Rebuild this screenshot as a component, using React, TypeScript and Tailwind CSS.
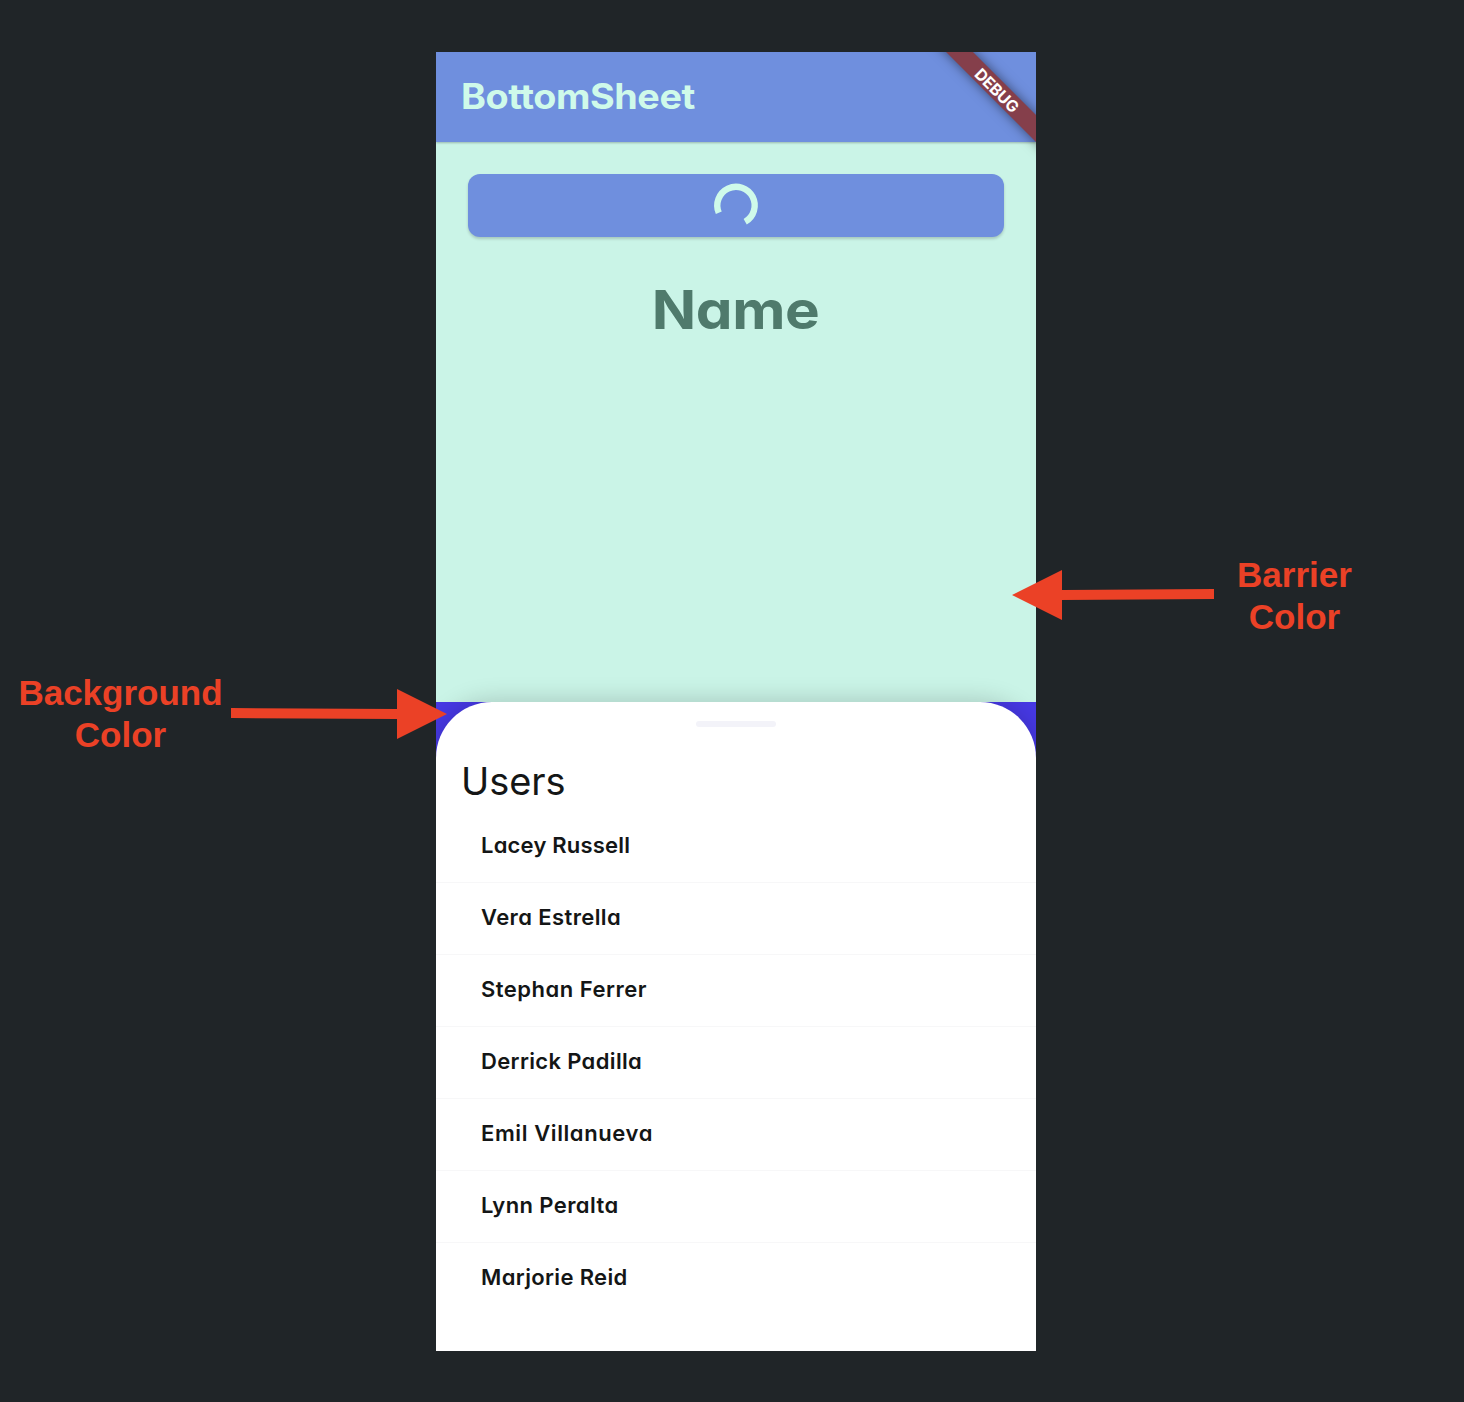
const users = [
  { name: 'Lacey Russell', tracking: 'tracking-[0.2px]' },
  { name: 'Vera Estrella', tracking: 'tracking-[0.4px]' },
  { name: 'Stephan Ferrer', tracking: 'tracking-[0.5px]' },
  { name: 'Derrick Padilla', tracking: 'tracking-[0.35px]' },
  { name: 'Emil Villanueva', tracking: 'tracking-[0.6px]' },
  { name: 'Lynn Peralta', tracking: 'tracking-[0.4px]' },
  { name: 'Marjorie Reid', tracking: 'tracking-[0.35px]' },
];

function AppBar() {
  return (
    <header className="relative z-10 flex h-[89.5px] shrink-0 items-center bg-[#6f8fde] pl-[25px] shadow-[0_1px_2px_rgba(0,0,0,0.25)]">
      <h1 className="origin-left scale-x-[1.078] text-[35px] leading-none font-bold tracking-[-0.4px] text-[#cffaea]">
        BottomSheet
      </h1>
    </header>
  );
}

function DebugBanner() {
  return (
    <div className="absolute top-0 right-0 z-20 size-[120px] overflow-hidden">
      <div className="absolute top-[27px] left-[-10px] flex h-[19px] w-[180px] rotate-45 items-center justify-center bg-[#853f4b] pl-[4px] font-['Inter',sans-serif] text-[16px] leading-none font-bold tracking-[-0.2px] text-white shadow-[0_0_12px_rgba(0,0,0,0.5)]">
        DEBUG
      </div>
    </div>
  );
}

function LoadingButton() {
  return (
    <button className="flex h-[63.5px] w-full items-center justify-center rounded-[12px] bg-[#6f8fde] shadow-[0_2px_3px_rgba(0,0,0,0.18)]">
      <svg className="overflow-visible" width="44" height="44" viewBox="0 0 44 44" fill="none">
        <path d="M4.8 29.8A18.7 18.7 0 1 1 31.2 38.7" stroke="#cffaea" strokeWidth="6.4" />
      </svg>
    </button>
  );
}

function BottomSheet() {
  return (
    <div className="h-[649.5px] shrink-0 bg-[#4739e5]">
      <section className="flex h-full flex-col rounded-t-[56px] bg-white pt-[19px] text-[#141616] shadow-[0_0_26px_rgba(0,0,0,0.2)]">
        <div className="h-[6px] w-[80px] shrink-0 self-center rounded-full bg-[#f3f3f9]" />
        <h2 className="mt-[29px] pl-[25px] text-[38px] leading-[50px] font-normal tracking-[-0.1px]">Users</h2>
        <ul className="mt-[5px]">
          {users.map((user) => (
            <li
              key={user.name}
              className={`flex h-[72px] items-center border-b border-[#f7f7f8] pb-[2px] pl-[45px] text-[22px] leading-none font-semibold last:border-transparent ${user.tracking}`}
            >
              {user.name}
            </li>
          ))}
        </ul>
      </section>
    </div>
  );
}

function Phone() {
  return (
    <main className="relative mt-[52px] flex h-[1299px] flex-col overflow-hidden bg-[#caf4e7] font-['Inter',sans-serif] font-normal [font-feature-settings:'cv11']">
      <AppBar />
      <DebugBanner />
      <div className="flex h-[560px] shrink-0 flex-col items-center px-[32px] pt-[32px]">
        <LoadingButton />
        <p className="mt-[41px] scale-x-[1.08] text-[54px] leading-[64px] font-bold tracking-[-0.4px] text-[#4f7a6c]">
          Name
        </p>
      </div>
      <BottomSheet />
    </main>
  );
}

export default function App() {
  return (
    <div className="grid h-[1402px] w-[1464px] grid-cols-[436px_600px_428px] overflow-hidden bg-[#202528] font-['Liberation_Sans',sans-serif] text-[35px] leading-[42px] font-bold text-[#eb4126]">
      <aside className="relative z-30 flex items-start pt-[672px]">
        <div className="w-[231px] shrink-0 pl-[10px] text-center">
          <p>Background</p>
          <p>Color</p>
        </div>
        <svg className="mt-[16px] shrink-0" width="217" height="52" viewBox="0 0 217 52" fill="currentColor">
          <path d="M0 20L166 21V1L216 26L166 51V31L0 30Z" />
        </svg>
      </aside>
      <Phone />
      <aside className="relative z-30 flex items-start pt-[554px]">
        <svg className="mt-[15px] -ml-[24px] shrink-0" width="202" height="52" viewBox="0 0 202 52" fill="currentColor">
          <path d="M202 20L50 21V1L0 26L50 51V31L202 30Z" />
        </svg>
        <div className="ml-[10px] w-[141px] text-center">
          <p>Barrier</p>
          <p>Color</p>
        </div>
      </aside>
    </div>
  );
}
